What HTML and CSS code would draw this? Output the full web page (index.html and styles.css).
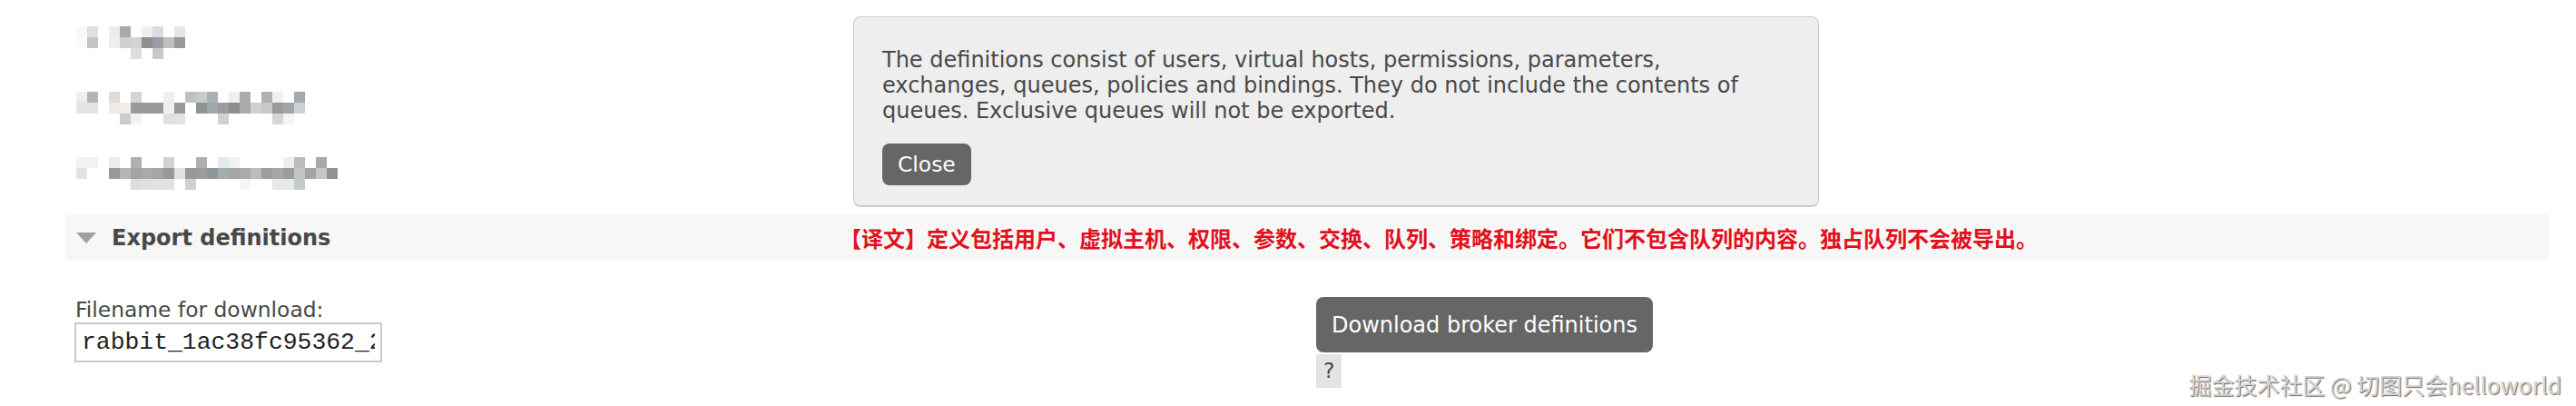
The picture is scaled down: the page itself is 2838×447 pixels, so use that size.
FILE: index.html
```html
<!DOCTYPE html>
<html lang="en">
<head>
    <meta charset="UTF-8">
    <title>Export definitions</title>
    <link rel="stylesheet" href="styles.css">
</head>
<body>

    <div class="page">

        <!-- blurred nav entries -->
        <div class="nav-list">
            <svg width="120" height="36" viewBox="0 0 120 36">
                <rect x="0" y="0" width="12" height="12" fill="#f8f8f8"/>
                <rect x="12" y="0" width="12" height="12" fill="#e0e0e0"/>
                <rect x="36" y="0" width="12" height="12" fill="#efebe8"/>
                <rect x="48" y="0" width="12" height="12" fill="#a8a8a8"/>
                <rect x="72" y="0" width="12" height="12" fill="#efefef"/>
                <rect x="84" y="0" width="12" height="12" fill="#d8dde3"/>
                <rect x="108" y="0" width="12" height="12" fill="#e6e6e6"/>
                <rect x="0" y="12" width="12" height="12" fill="#fafafa"/>
                <rect x="12" y="12" width="12" height="12" fill="#c4c4c4"/>
                <rect x="36" y="12" width="12" height="12" fill="#eeeeee"/>
                <rect x="48" y="12" width="12" height="12" fill="#cfcfcf"/>
                <rect x="60" y="12" width="12" height="12" fill="#d2d2d2"/>
                <rect x="72" y="12" width="12" height="12" fill="#8f8f8f"/>
                <rect x="84" y="12" width="12" height="12" fill="#9d9da5"/>
                <rect x="96" y="12" width="12" height="12" fill="#c0c0c0"/>
                <rect x="108" y="12" width="12" height="12" fill="#999999"/>
                <rect x="60" y="24" width="12" height="12" fill="#dedede"/>
                <rect x="84" y="24" width="12" height="12" fill="#c9c9cc"/>
            </svg>
            <svg width="252" height="36" viewBox="0 0 252 36">
                <rect x="0" y="0" width="12" height="12" fill="#eeeeee"/>
                <rect x="12" y="0" width="12" height="12" fill="#b5b5b5"/>
                <rect x="36" y="0" width="12" height="12" fill="#dcdcdc"/>
                <rect x="60" y="0" width="12" height="12" fill="#d5d5d5"/>
                <rect x="96" y="0" width="12" height="12" fill="#efefef"/>
                <rect x="120" y="0" width="12" height="12" fill="#c0c0c0"/>
                <rect x="132" y="0" width="12" height="12" fill="#c5cccc"/>
                <rect x="144" y="0" width="12" height="12" fill="#a8b0b3"/>
                <rect x="168" y="0" width="12" height="12" fill="#efefef"/>
                <rect x="180" y="0" width="12" height="12" fill="#aaaaaa"/>
                <rect x="204" y="0" width="12" height="12" fill="#b0b0b0"/>
                <rect x="216" y="0" width="12" height="12" fill="#f0f0f0"/>
                <rect x="240" y="0" width="12" height="12" fill="#a8a8a8"/>
                <rect x="0" y="12" width="12" height="12" fill="#e4e4e4"/>
                <rect x="12" y="12" width="12" height="12" fill="#e4e4e4"/>
                <rect x="36" y="12" width="12" height="12" fill="#efeae6"/>
                <rect x="48" y="12" width="12" height="12" fill="#f2ece8"/>
                <rect x="60" y="12" width="36" height="12" fill="#9a9a9a"/>
                <rect x="96" y="12" width="12" height="12" fill="#f0f0f0"/>
                <rect x="108" y="12" width="12" height="12" fill="#999999"/>
                <rect x="132" y="12" width="12" height="12" fill="#8d9395"/>
                <rect x="144" y="12" width="12" height="12" fill="#a0a8aa"/>
                <rect x="156" y="12" width="12" height="12" fill="#9c9c9c"/>
                <rect x="168" y="12" width="12" height="12" fill="#8e8e8e"/>
                <rect x="180" y="12" width="12" height="12" fill="#aaaaaa"/>
                <rect x="192" y="12" width="12" height="12" fill="#d0d0d0"/>
                <rect x="204" y="12" width="12" height="12" fill="#c8c8c8"/>
                <rect x="216" y="12" width="12" height="12" fill="#999999"/>
                <rect x="228" y="12" width="12" height="12" fill="#a0a4a8"/>
                <rect x="240" y="12" width="12" height="12" fill="#ccd2d4"/>
                <rect x="48" y="24" width="12" height="12" fill="#cbcbcb"/>
                <rect x="60" y="24" width="12" height="12" fill="#f2f2f2"/>
                <rect x="96" y="24" width="12" height="12" fill="#e0e0e0"/>
                <rect x="108" y="24" width="12" height="12" fill="#e2e2e2"/>
                <rect x="156" y="24" width="12" height="12" fill="#d0d0d0"/>
                <rect x="216" y="24" width="12" height="12" fill="#d9d5d2"/>
                <rect x="228" y="24" width="12" height="12" fill="#f5f5f5"/>
            </svg>
            <svg width="288" height="36" viewBox="0 0 288 36">
                <rect x="0" y="0" width="24" height="12" fill="#f2f2f2"/>
                <rect x="36" y="0" width="12" height="12" fill="#efebe8"/>
                <rect x="60" y="0" width="12" height="12" fill="#b0b0b0"/>
                <rect x="96" y="0" width="12" height="12" fill="#d3d3d3"/>
                <rect x="132" y="0" width="12" height="12" fill="#b0b0b0"/>
                <rect x="156" y="0" width="12" height="12" fill="#e4ebec"/>
                <rect x="168" y="0" width="12" height="12" fill="#eef2f2"/>
                <rect x="228" y="0" width="12" height="12" fill="#eeeeee"/>
                <rect x="240" y="0" width="12" height="12" fill="#bbbbbb"/>
                <rect x="264" y="0" width="12" height="12" fill="#a8a8a8"/>
                <rect x="0" y="12" width="12" height="12" fill="#e2e2e2"/>
                <rect x="36" y="12" width="12" height="12" fill="#999999"/>
                <rect x="48" y="12" width="12" height="12" fill="#b5b5b5"/>
                <rect x="60" y="12" width="12" height="12" fill="#a4a4a4"/>
                <rect x="72" y="12" width="12" height="12" fill="#aaaaaa"/>
                <rect x="84" y="12" width="12" height="12" fill="#a4a4a4"/>
                <rect x="96" y="12" width="12" height="12" fill="#999999"/>
                <rect x="108" y="12" width="12" height="12" fill="#e5e0db"/>
                <rect x="120" y="12" width="12" height="12" fill="#999999"/>
                <rect x="132" y="12" width="12" height="12" fill="#9c9c9c"/>
                <rect x="144" y="12" width="12" height="12" fill="#8e9699"/>
                <rect x="156" y="12" width="12" height="12" fill="#a2adb0"/>
                <rect x="168" y="12" width="12" height="12" fill="#a8a2a2"/>
                <rect x="180" y="12" width="12" height="12" fill="#aaaaaa"/>
                <rect x="192" y="12" width="12" height="12" fill="#bbbbbb"/>
                <rect x="204" y="12" width="12" height="12" fill="#9d9d9d"/>
                <rect x="216" y="12" width="12" height="12" fill="#a6a6a6"/>
                <rect x="228" y="12" width="12" height="12" fill="#9c9c9c"/>
                <rect x="240" y="12" width="12" height="12" fill="#c0c4c5"/>
                <rect x="252" y="12" width="12" height="12" fill="#a0a4a8"/>
                <rect x="264" y="12" width="12" height="12" fill="#c6c6c6"/>
                <rect x="276" y="12" width="12" height="12" fill="#8e9496"/>
                <rect x="60" y="24" width="12" height="12" fill="#dddddd"/>
                <rect x="72" y="24" width="12" height="12" fill="#e0e0e0"/>
                <rect x="84" y="24" width="24" height="12" fill="#e2e2e2"/>
                <rect x="120" y="24" width="12" height="12" fill="#d0d0d0"/>
                <rect x="180" y="24" width="12" height="12" fill="#f5f5f5"/>
                <rect x="216" y="24" width="24" height="12" fill="#e8e8e8"/>
                <rect x="240" y="24" width="12" height="12" fill="#c4cacc"/>
            </svg>
        </div>

        <div class="help-popup">
            <p>The definitions consist of users, virtual hosts, permissions, parameters, exchanges, queues, policies and bindings. They do not include the contents of queues. Exclusive queues will not be exported.</p>
            <button class="btn close-btn">Close</button>
        </div>

        <div class="section-bar">
            <span class="toggle"></span>
            <h2 class="section-title">Export definitions</h2>
            <span class="translation">【译文】定义包括用户、虚拟主机、权限、参数、交换、队列、策略和绑定。它们不包含队列的内容。独占队列不会被导出。</span>
        </div>

        <form class="export-form">
            <div class="field">
                <label for="download-filename">Filename for download:</label>
                <input type="text" id="download-filename" value="rabbit_1ac38fc95362_2023-3-8.json">
            </div>
            <div class="actions">
                <button type="button" class="btn download-btn">Download broker definitions</button>
                <span class="help">?</span>
            </div>
        </form>

        <div class="watermark">掘金技术社区 @ 切图只会helloworld</div>
    </div>

</body>
</html>
```

FILE: styles.css
```css
body {
    margin: 0;
    font-family: Verdana, "DejaVu Sans", sans-serif;
    font-size: 23.4px;
    color: #484848;
    background: #fff;
}
.page {
    position: relative;
    height: 447px;
    box-sizing: border-box;
    padding: 29px 30px 0 72px;
}
.nav-list {
    display: flex;
    flex-direction: column;
    gap: 36px;
    padding-left: 12px;
}
.nav-list svg {
    display: block;
}
.help-popup {
    position: absolute;
    left: 940px;
    top: 18px;
    width: 1064px;
    box-sizing: border-box;
    padding: 33px 31px 22px;
    background: #eeeeee;
    border: 1px solid #cccccc;
    border-bottom-width: 2px;
    border-radius: 8px;
}
.help-popup p {
    margin: 0 0 22px;
    font-size: 24px;
    line-height: 28px;
}
.btn {
    border: none;
    font-family: inherit;
    font-size: 23.4px;
    color: #fff;
    background: #666666;
    cursor: pointer;
}
.close-btn {
    display: block;
    height: 46px;
    padding: 0 17px;
    border-radius: 8px;
}
.section-bar {
    display: grid;
    grid-template-columns: 51px 802px auto;
    align-items: center;
    height: 51px;
    margin-top: 27px;
    background: #f7f7f7;
    border-radius: 4px;
}
.toggle {
    justify-self: start;
    margin-left: 12px;
    width: 0;
    height: 0;
    border-left: 11px solid transparent;
    border-right: 11px solid transparent;
    border-top: 12px solid #a0a0a0;
}
.section-title {
    margin: 0;
    font-size: 24px;
    font-weight: bold;
}
.translation {
    font-family: "Noto Sans CJK SC", sans-serif;
    font-size: 24px;
    font-weight: bold;
    color: #e3101c;
}
.export-form {
    display: flex;
    margin-top: 40px;
    padding-left: 10px;
}
.field {
    flex: 0 0 1368px;
}
.field label {
    display: block;
    line-height: 28px;
    padding-left: 1px;
}
.field input {
    display: block;
    width: 339px;
    height: 44px;
    box-sizing: border-box;
    margin: 0;
    padding: 0 6px;
    border: 2px solid #c8c8c8;
    font-family: "Liberation Mono", "Courier New", monospace;
    font-size: 26.4px;
    color: #222;
}
.actions {
    display: flex;
    flex-direction: column;
    align-items: flex-start;
}
.download-btn {
    height: 61px;
    padding: 0 17px;
    border-radius: 8px;
    font-size: 24px;
}
.help {
    margin-top: 2px;
    padding: 0 8px;
    line-height: 37px;
    background: #e4e4e4;
    color: #444;
}
.watermark {
    position: absolute;
    right: 16px;
    bottom: 9px;
    font-family: "Noto Sans CJK SC", sans-serif;
    font-size: 25px;
    line-height: 1.2;
    color: #d4d4d4;
    text-shadow: 1px 1px 1px #666, -1px -1px 0 #fff;
}
```
